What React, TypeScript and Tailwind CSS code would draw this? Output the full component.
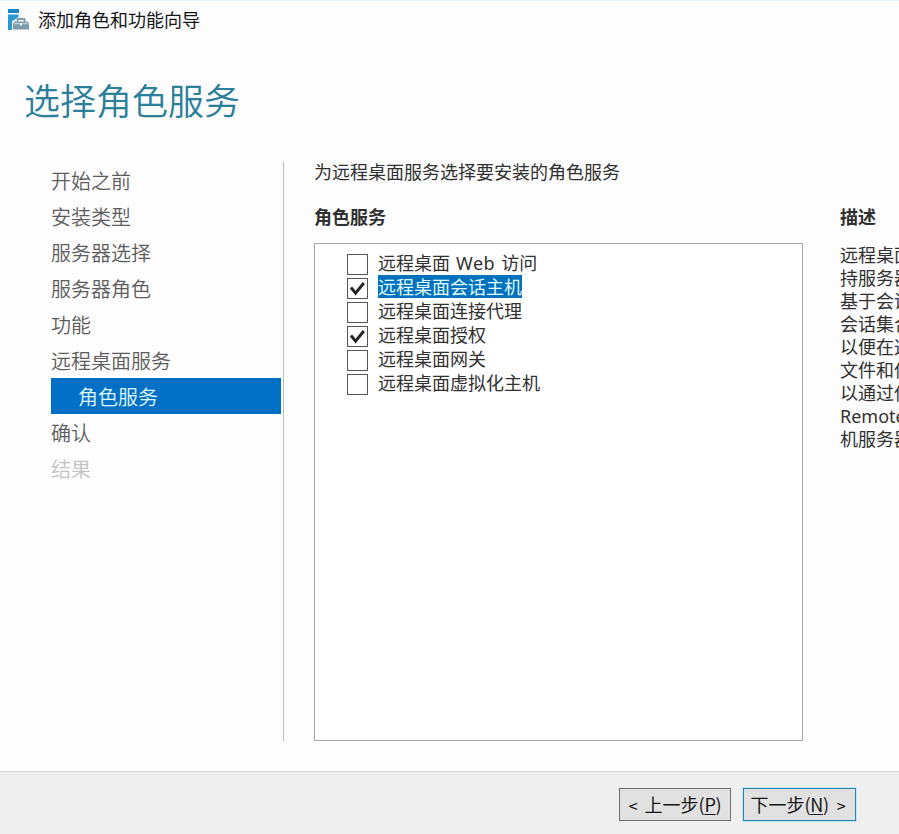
const steps = [
  { label: "开始之前" },
  { label: "安装类型" },
  { label: "服务器选择" },
  { label: "服务器角色" },
  { label: "功能" },
  { label: "远程桌面服务" },
  { label: "角色服务", active: true },
  { label: "确认" },
  { label: "结果", disabled: true },
];

const roleServices = [
  { name: "远程桌面 Web 访问", checked: false },
  { name: "远程桌面会话主机", checked: true, selected: true },
  { name: "远程桌面连接代理", checked: false },
  { name: "远程桌面授权", checked: true },
  { name: "远程桌面网关", checked: false },
  { name: "远程桌面虚拟化主机", checked: false },
];

const description = [
  "远程桌面",
  "持服务器",
  "基于会话",
  "会话集合",
  "以便在这",
  "文件和使",
  "以通过使",
  "Remote",
  "机服务器",
];

function WizardIcon() {
  return (
    <svg width="22" height="22" viewBox="0 0 22 22" className="shrink-0">
      <path d="M0 0h11v4H0z" fill="#1687c4" />
      <path d="M0 5.500h10.500v2.500L4 12.500V21H0z" fill="#2b9ad2" />
      <path d="M9.500 12.500v-2.500h7v2.500" fill="none" stroke="#5f7f93" strokeWidth="1.500" />
      <path d="M6.500 12.500h13l1.500 2v6H5v-6z" fill="#7c9bad" />
      <path d="M6.500 14.700h5M14.500 14.700h5" stroke="#c9d9e2" strokeWidth="1.200" />
      <path d="M12 14h2v2.500h-2z" fill="#e4edf2" />
    </svg>
  );
}

function Checkbox({ checked }: { checked: boolean }) {
  return (
    <span className="flex h-[21px] w-[21px] shrink-0 items-center justify-center border border-[#555] bg-white">
      {checked && (
        <svg width="17" height="17" viewBox="0 0 17 17" fill="none">
          <path d="M2 7.500 L6.600 13.200 L14.800 3" stroke="#252525" strokeWidth="2.900" />
        </svg>
      )}
    </span>
  );
}

export default function App() {
  return (
    <div className="flex h-[834px] w-[899px] flex-col overflow-hidden bg-[#fdfdfd] font-['Noto_Sans_CJK_SC','Noto_Sans',sans-serif] text-[18px] whitespace-nowrap text-[#303030]">
      <header className="flex h-10 shrink-0 items-center gap-[8px] border-t border-[#e3f6fa] pb-0.5 pl-2 text-[#151515]">
        <WizardIcon />
        <span>添加角色和功能向导</span>
      </header>

      <h1 className="h-[122px] shrink-0 pt-[32px] pl-6 text-[36px] leading-[54px] font-[350] text-[#2b7f99]">
        选择角色服务
      </h1>

      <main className="flex h-[609px] shrink-0">
        <nav className="ml-[51px] w-[230px] text-[20px] leading-9 font-[350] text-[#5c5c5c]">
          {steps.map((step) => (
            <div
              key={step.label}
              className={
                step.active
                  ? "h-9 bg-[#0070c6] pt-px pl-[27px] text-[#e0faff]"
                  : step.disabled
                    ? "h-9 pt-px text-[#c4c4c4]"
                    : "h-9 pt-px"
              }
            >
              {step.label}
            </div>
          ))}
        </nav>
        <div className="ml-[2px] h-[579px] w-px bg-[#bdbdbd]" />

        <section className="ml-[30px] w-[489px] pt-px">
          <p className="h-[35px] leading-4">为远程桌面服务选择要安装的角色服务</p>
          <h2 className="h-[45px] leading-9 font-bold">角色服务</h2>
          <ul className="h-[498px] border border-[#a5a5a5] bg-white pt-[8px] pl-8">
            {roleServices.map((service) => (
              <li key={service.name} className="flex h-6 items-center gap-[10px]">
                <Checkbox checked={service.checked} />
                <span
                  className={
                    service.selected
                      ? "mb-[3px] bg-[#0071bd] leading-[23px] text-[#e0faff]"
                      : "mb-[3px] leading-[23px]"
                  }
                >
                  {service.name.includes("Web") ? (
                    <>
                      远程桌面 <span className="mr-[2px] ml-[2px] font-['Noto_Sans'] tracking-[0.5px]">Web</span> 访问
                    </>
                  ) : (
                    service.name
                  )}
                </span>
              </li>
            ))}
          </ul>
        </section>

        <aside className="ml-[37px] w-[59px] overflow-hidden pt-9">
          <h2 className="h-[46px] leading-9 font-bold">描述</h2>
          {description.map((line) => (
            <p key={line} className="h-[23px] font-['Noto_Sans','Noto_Sans_CJK_SC',sans-serif] leading-[23px]">
              {line}
            </p>
          ))}
        </aside>
      </main>

      <footer className="flex grow items-start justify-end gap-3 border-t border-[#d8d8d8] bg-[#efefef] pt-4 pr-[43px] text-[#151515]">
        <button className="flex h-[33px] w-[112px] items-center justify-center gap-[7px] border border-[#6e6e6e] bg-[#e1e1e1]">
          <span className="text-base">&lt;</span>
          <span>
            上一步<span className="tracking-[-0.3px]">(<u className="underline-offset-2">P</u>)</span>
          </span>
        </button>
        <button className="flex h-[33px] w-[113px] items-center justify-center gap-2 border border-[#2b7fa8] bg-[#e1e1e1] pr-[3px] shadow-[0_0_0_1px_#bdeafa]">
          <span>
            下一步<span className="tracking-[-0.3px]">(<u className="underline-offset-2">N</u>)</span>
          </span>
          <span className="text-base">&gt;</span>
        </button>
      </footer>
    </div>
  );
}
